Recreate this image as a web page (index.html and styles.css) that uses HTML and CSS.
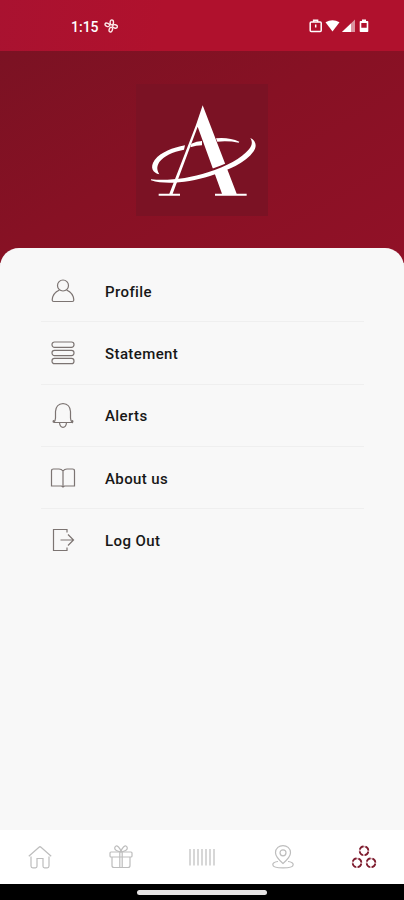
FILE: index.html
```html
<!DOCTYPE html>
<html lang="en">
<head>
  <meta charset="UTF-8">
  <meta name="viewport" content="width=device-width, initial-scale=1">
  <title>Menu</title>
  <link rel="stylesheet" href="styles.css">
</head>
<body>
  <div class="app">
    <div class="statusbar">
      <span class="time">1:15</span>
      <svg class="fan" width="14" height="14" viewBox="0 0 14 14">
        <ellipse cx="7.8" cy="3.4" rx="1.7" ry="2.5"/>
        <ellipse cx="11" cy="7.4" rx="2.4" ry="1.7" transform="rotate(15 11 7.4)"/>
        <ellipse cx="6.8" cy="10.6" rx="1.6" ry="2.4" transform="rotate(20 6.8 10.6)"/>
        <ellipse cx="3.3" cy="5.8" rx="2.4" ry="1.6" transform="rotate(20 3.3 5.8)"/>
      </svg>
      <svg class="phone-state" width="60" height="14" viewBox="0 0 60 14">
        <rect x="1.2" y="3" width="11" height="9.4" rx="1" class="line"/>
        <path d="M4.6 3V1.2h4V3M6.7 5.5v3" class="line"/>
        <path d="M16.5 3.3Q23.5-1 30.5 3.3L23.5 12.6Z"/>
        <path d="M33 13L46 .6V13Z" opacity=".55"/>
        <path d="M33 13L42 4.4V13Z"/>
        <path fill-rule="evenodd" d="M51.5 2H53V.6h4V2h1.5q.8 0 .8.8v9.4q0 .8-.8.8h-7q-.8 0-.8-.8V2.800q0-.8.8-.8zM52.300 4v4.700h5.400V4z"/>
      </svg>
    </div>
    <div class="header">
      <div class="logo">
        <svg width="132" height="132" viewBox="48 42 396 396">
          <!-- back of the ring -->
          <path d="M118 313C99 309 88 292 104 270C123 246 158 233 195 226L192 239C157 246 131 258 118 276C108 292 112 302 118 313Z"/>
          <path d="M214 221Q230 214 246 213L246 226Q229 226 211 232Z"/>
          <path d="M288 205Q326 201 358 215L356 218Q326 212 292 215Z"/>
          <!-- letter strokes -->
          <path d="M248 106L350 371H380V377H285V371H306L233 170L158 371H180V377H116V371H148L228 165Z"/>
          <!-- front of the ring -->
          <path class="gap" d="M225 317Q275 305 330 281"/>
          <path d="M93 328C143 333 207 326 264 307C319 289 365 265 387 238C398 224 397 214 391 204C407 211 412 228 401 244C377 280 323 301 270 318C209 337 139 346 93 331Z"/>
        </svg>
      </div>
    </div>
    <div class="panel">
      <ul class="menu">
        <li>
          <svg viewBox="0 0 26 26"><circle cx="13" cy="7.500" r="5.500"/><path d="M9.500 12Q2.500 15 2.200 22Q2.200 23.500 3.700 23.500H22.300Q23.800 23.500 23.800 22Q23.500 15 16.500 12"/></svg>
          <span>Profile</span>
        </li>
        <li>
          <svg viewBox="0 0 26 26"><rect x="2" y="2" width="22" height="5.300" rx="2.500"/><rect x="2" y="10.300" width="22" height="5.300" rx="2.500"/><rect x="2" y="18.400" width="22" height="5.300" rx="2.500"/></svg>
          <span>Statement</span>
        </li>
        <li>
          <svg viewBox="0 0 26 26"><path d="M3.500 20.500Q5.500 19 5.500 16V9.500Q6 2 13 1.500Q20 2 20.500 9.500V16Q20.500 19 22.500 20.500Q23.500 18.700 22 18.500M3.500 20.500H22.500M3.500 20.500Q2.500 18.700 4 18.500M9.500 20.800Q10 25.300 13 25.300Q16 25.300 16.500 20.800"/></svg>
          <span>Alerts</span>
        </li>
        <li>
          <svg viewBox="0 0 26 26"><path d="M13 6Q11.500 4 9 4H3.500Q1.500 4 1.500 6V21H11.500L13 22L14.500 21H24.500V6Q24.500 4 22.500 4H17Q14.500 4 13 6ZM13 6V22"/></svg>
          <span>About us</span>
        </li>
        <li>
          <svg viewBox="0 0 26 26"><path d="M17 5.500V2.500H3.500V23.500H17V20.500M10.500 13H23.500M18 7.500L23.500 13L18 18.500"/></svg>
          <span>Log Out</span>
        </li>
      </ul>
    </div>
    <div class="tabs">
      <a class="tab">
        <svg viewBox="0 0 26 26"><path d="M4 12.500V22Q4 23.800 5.800 23.800H8.500Q10 23.800 10 22.300V14.500H16V22.300Q16 23.800 17.500 23.800H20.200Q22 23.800 22 22V12.500M1.800 12.200L12 3.200Q13 2.300 14 3.200L24.200 12.200"/></svg>
      </a>
      <a class="tab">
        <svg viewBox="0 0 26 26"><rect x="2" y="8" width="22" height="5" rx="1"/><path d="M4 13V21.500Q4 23.500 6 23.500H20Q22 23.500 22 21.500V13M11.800 8V23.500M14.200 8V23.500M13 8Q6.500 6.800 6.700 4Q7.500.5 10.500 3Q12.500 4.800 13 8Q13.500 4.800 15.500 3Q18.500.5 19.300 4Q19.500 6.800 13 8"/></svg>
      </a>
      <a class="tab">
        <svg viewBox="0 0 26 26"><path d="M1 5V21.500M5 5V21.500M9 5V21.500M13 5V21.500M17 5V21.500M21 5V21.500M25 5V21.500"/></svg>
      </a>
      <a class="tab">
        <svg viewBox="0 0 26 26"><path d="M13 19.500Q5.500 13 5.500 8.800C5.500-.8 20.500-.8 20.500 8.800Q20.500 13 13 19.500Z"/><circle cx="13" cy="8.800" r="3"/><path d="M8 17.500Q2.800 18 2.800 20.700C3 25 23 25 23.200 20.700Q23.200 18 18 17.500"/></svg>
      </a>
      <a class="tab active">
        <svg viewBox="0 0 26 26">
          <g class="rings"><circle cx="13" cy="6.800" r="4.400"/><circle cx="6" cy="18.800" r="4.400"/><circle cx="20" cy="18.800" r="4.400"/></g>
          <g class="dashes"><circle cx="13" cy="6.800" r="4.400"/><circle cx="6" cy="18.800" r="4.400"/><circle cx="20" cy="18.800" r="4.400"/></g>
        </svg>
      </a>
    </div>
    <div class="gesture"><div class="handle"></div></div>
  </div>
</body>
</html>
```
FILE: styles.css
```css
* {
  box-sizing: border-box;
}
body {
  margin: 0;
  background: #dcd4d6;
  font-family: Roboto, "Liberation Sans", sans-serif;
}
svg {
  display: block;
  flex: none;
}
.app {
  height: 900px;
  display: flex;
  flex-direction: column;
}

/* phone status bar */
.statusbar {
  height: 51px;
  padding: 1px 35px 0 71px;
  display: flex;
  align-items: center;
  background: linear-gradient(100deg, #a91230, #b0112d 40%);
  color: #fff;
}
.time {
  width: 28px;
  padding-top: 2px;
  font-size: 14px;
  font-weight: 500;
  white-space: nowrap;
}
.fan {
  margin-left: 5px;
  fill: none;
  stroke: #fce9e9;
  stroke-width: 1.4;
}
.phone-state {
  margin-left: auto;
  fill: #fff;
}
.phone-state .line {
  fill: none;
  stroke: #fff;
  stroke-width: 1.5;
}

/* logo area, runs on behind the rounded panel */
.header {
  height: 212px;
  padding-top: 33px;
  display: flex;
  justify-content: center;
  background: linear-gradient(150deg, #7b1223, #871124 45%, #911127);
}
.logo {
  width: 132px;
  height: 132px;
  background: #7b1224;
}
.logo svg {
  fill: #fff;
}
.logo .gap {
  fill: none;
  stroke: #7b1224;
  stroke-width: 11;
}

.panel {
  flex: 1;
  margin-top: -15px;
  padding: 12px 40px 0 41px;
  border-radius: 19px 19px 0 0;
  background: #f8f8f8;
}
.menu {
  margin: 0;
  padding: 0;
  list-style: none;
}
.menu li {
  height: 62.3px;
  padding-left: 9px;
  display: flex;
  align-items: center;
  gap: 29px;
  border-bottom: 1px solid #efefef;
  color: #171717;
  font-size: 15px;
  font-weight: 500;
  letter-spacing: .4px;
}
.menu span {
  padding-top: 2px;
}
.menu li:last-child {
  border-bottom: 0;
}
.menu svg {
  width: 26px;
  height: 26px;
  fill: none;
  stroke: #7c7472;
  stroke-width: 1.2;
}

/* bottom tabs */
.tabs {
  height: 54px;
  display: flex;
  background: #fff;
}
.tab {
  flex: 1;
  display: flex;
  align-items: center;
  justify-content: center;
}
.tab svg {
  width: 26px;
  height: 26px;
  fill: none;
  stroke: #bdbdbd;
  stroke-width: 1.2;
}
.tab .rings {
  stroke: #d3a9b1;
  stroke-width: 1.5;
}
.tab .dashes {
  stroke: #7d1c2e;
  stroke-width: 1.7;
  stroke-dasharray: 4.9 2.01;
  stroke-dashoffset: -1;
}
.gesture {
  height: 16px;
  padding-top: 6px;
  background: #000;
}
.handle {
  width: 130px;
  height: 5px;
  margin: 0 auto;
  border-radius: 3px;
  background: #e6e4e4;
}
```
